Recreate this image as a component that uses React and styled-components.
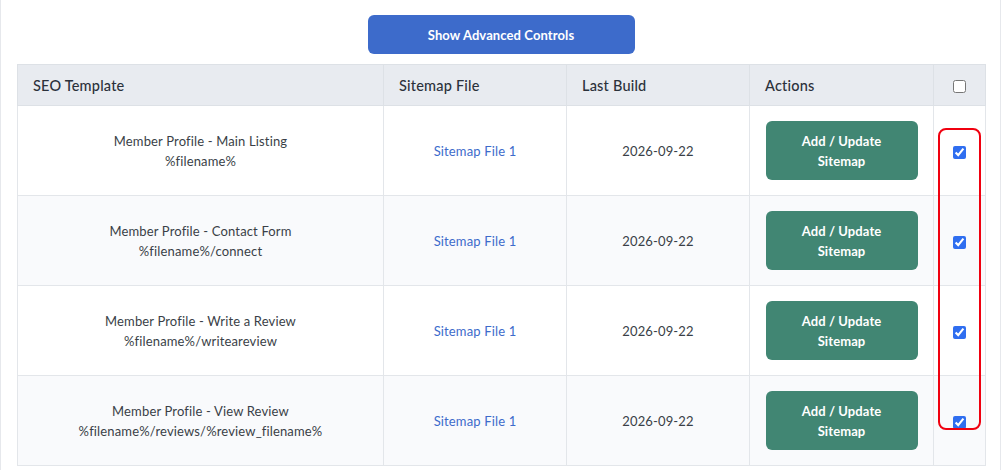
import React from 'react'
import styled, { createGlobalStyle } from 'styled-components'

const GlobalStyle = createGlobalStyle`
    body {
        margin: 0;
        background: #ffffff;
        font-family: Lato, "Noto Sans", Arial, sans-serif;
        color: #333a44;
    }
`

const Panel = styled.div`
    width: 968px;
    padding: 15px 15px 0 16px;
    border-left: 1px solid #e6e8ec;
    border-right: 1px solid #e6e8ec;
    min-height: 455px;
`

const Toolbar = styled.div`
    display: flex;
    justify-content: center;
    margin-bottom: 10px;
`

const BlueButton = styled.button`
    width: 267px;
    height: 39px;
    border: none;
    border-radius: 6px;
    background: #3d6bcb;
    color: #fff;
    font-family: inherit;
    font-size: 13px;
    font-weight: 700;
    letter-spacing: 0.1px;
    cursor: pointer;
`

const TableWrap = styled.div`
    position: relative;
`

const Table = styled.table`
    width: 968px;
    border-collapse: collapse;
    table-layout: fixed;
    font-size: 13px;
    letter-spacing: 0.15px;
`

const HeadCell = styled.th`
    height: 40px;
    padding: 0 15px;
    background: #e8ebf0;
    border: 1px solid #dde1e6;
    text-align: ${p => (p.center ? 'center' : 'left')};
    font-size: 14.5px;
    font-weight: 500;
    letter-spacing: 0.2px;
    color: #2b313b;
`

const Row = styled.tr`
    background: ${p => (p.striped ? '#f9fafc' : '#ffffff')};
`

const Cell = styled.td`
    height: 89px;
    padding: 0 10px;
    border: 1px solid #e3e6ea;
    text-align: center;
    line-height: 20px;
    color: #3a3f47;
`

const SitemapLink = styled.a`
    color: #3d6bcb;
    text-decoration: none;
`

const GreenButton = styled.button`
    width: 152px;
    height: 59px;
    border: none;
    border-radius: 6px;
    background: #418673;
    color: #fff;
    font-family: inherit;
    font-size: 13px;
    font-weight: 700;
    line-height: 20px;
    letter-spacing: 0.1px;
    cursor: pointer;
`

const Check = styled.input.attrs({ type: 'checkbox' })`
    width: 13px;
    height: 13px;
    margin: 0;
    accent-color: #2f6ef0;
    vertical-align: middle;
`

const Highlight = styled.div`
    position: absolute;
    left: 921px;
    top: 64px;
    width: 39px;
    height: 298px;
    border: 2px solid #f0000f;
    border-radius: 8px;
    pointer-events: none;
`

const rows = [
    { name: 'Member Profile - Main Listing', path: '%filename%' },
    { name: 'Member Profile - Contact Form', path: '%filename%/connect' },
    { name: 'Member Profile - Write a Review', path: '%filename%/writeareview' },
    { name: 'Member Profile - View Review', path: '%filename%/reviews/%review_filename%' },
]

const App = () => {
    return (
        <>
            <GlobalStyle />
            <Panel>
                <Toolbar>
                    <BlueButton>Show Advanced Controls</BlueButton>
                </Toolbar>
                <TableWrap>
                    <Table>
                        <colgroup>
                            <col style={{ width: 366 }} />
                            <col style={{ width: 183 }} />
                            <col style={{ width: 183 }} />
                            <col style={{ width: 184 }} />
                            <col style={{ width: 52 }} />
                        </colgroup>
                        <thead>
                            <tr>
                                <HeadCell>SEO Template</HeadCell>
                                <HeadCell>Sitemap File</HeadCell>
                                <HeadCell>Last Build</HeadCell>
                                <HeadCell>Actions</HeadCell>
                                <HeadCell center><Check /></HeadCell>
                            </tr>
                        </thead>
                        <tbody>
                            {rows.map((r, i) => (
                                <Row key={r.name} striped={i % 2 === 1}>
                                    <Cell>
                                        {r.name}
                                        <br />
                                        {r.path}
                                    </Cell>
                                    <Cell>
                                        <SitemapLink href="#">Sitemap File 1</SitemapLink>
                                    </Cell>
                                    <Cell>2026-09-22</Cell>
                                    <Cell>
                                        <GreenButton>
                                            Add / Update
                                            <br />
                                            Sitemap
                                        </GreenButton>
                                    </Cell>
                                    <Cell>
                                        <Check defaultChecked />
                                    </Cell>
                                </Row>
                            ))}
                        </tbody>
                    </Table>
                    <Highlight />
                </TableWrap>
            </Panel>
        </>
    )
}

export default App
